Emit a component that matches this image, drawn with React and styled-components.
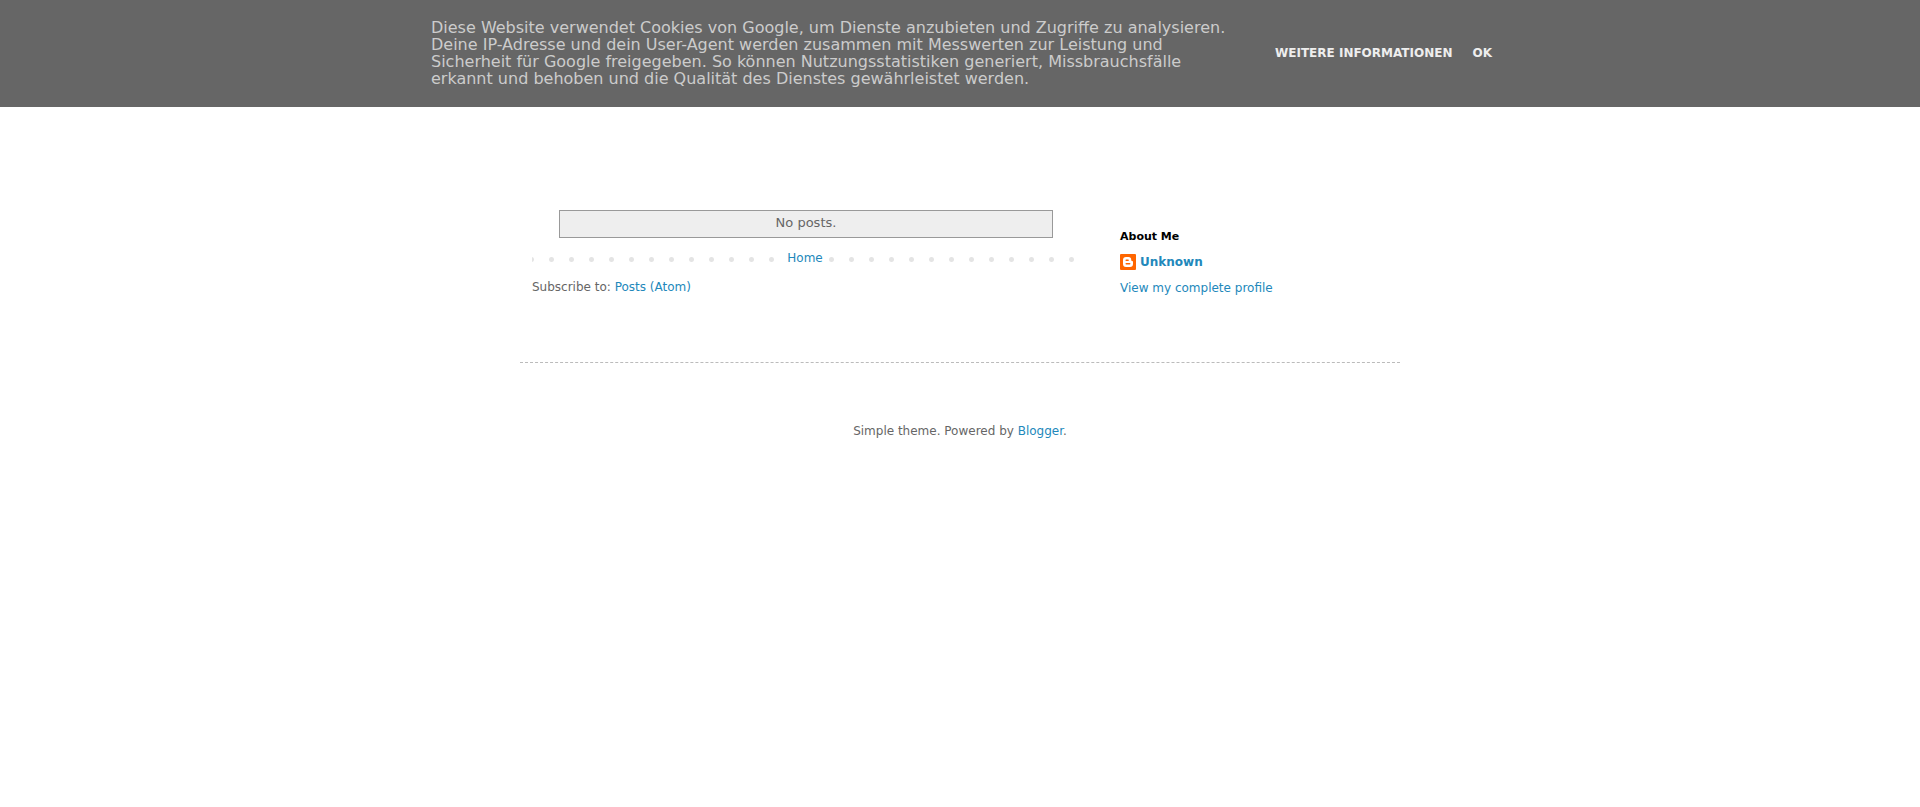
import React from 'react'
import styled, {createGlobalStyle} from 'styled-components'

const GlobalStyle = createGlobalStyle`
 body{
     margin: 0;
     background: #fff;
     color: #666;
     font: normal 12px/17px "DejaVu Sans", Verdana, sans-serif;
 }
 a{
     color: #2288bb;
     text-decoration: none;
 }
 a:hover{
     text-decoration: underline;
 }
`
const CookieBar = styled.div`
 display: flex;
 justify-content: center;
 background: #666;
 padding: 19px 16px 20px 19px;
`
const CookieInner = styled.div`
 display: flex;
 flex: 0 1 1061px;
 justify-content: space-between;
 align-items: flex-start;
`
const CookieText = styled.p`
 max-width: 800px;
 margin: 0;
 color: #ccc;
 font-size: 16px;
 line-height: 17px;
`
const CookieActions = styled.div`
 display: flex;
 flex-shrink: 0;
 gap: 20px;
 padding-top: 26px;
`
const CookieLink = styled.a`
 && {
     color: #eee;
     font-weight: bold;
     text-transform: uppercase;
 }
`
const CookieButton = styled.button`
 border: 0;
 padding: 0;
 background: none;
 color: #eee;
 font: inherit;
 font-weight: bold;
 text-transform: uppercase;
 cursor: pointer;
`
const Content = styled.div`
 box-sizing: border-box;
 max-width: 880px;
 margin: 0 auto;
`
const Columns = styled.div`
 display: grid;
 grid-template-columns: minmax(0, 546px) minmax(0, 260px);
 column-gap: 42px;
 padding: 103px 12px 65px;
`
const Main = styled.main`
 min-width: 0;
`
const StatusMessage = styled.div`
 margin: 0 25px 0 27px;
 padding: 3px 0 6px;
 border: 1px solid #999;
 background: #eee;
 font-size: 13px;
 text-align: center;
`
const Pager = styled.nav`
 margin: 12px 0;
 text-align: center;
 background-image: radial-gradient(circle at 47.5% 50%, #e4e4e4 2px, transparent 3px);
 background-size: 20px 17px;
 background-position: -10px 1px;
 background-repeat: repeat-x;
 a{
     display: inline-block;
     padding: 0 5px;
     background: #fff;
 }
`
const Sidebar = styled.aside`
 padding-top: 18px;
`
const WidgetTitle = styled.h2`
 margin: 0 0 9px;
 color: #000;
 font-size: 11px;
 line-height: 17px;
`
const ProfileName = styled.a`
 display: flex;
 align-items: flex-start;
 gap: 4px;
 margin-bottom: 9px;
 font-weight: bold;
`
const Footer = styled.footer`
 padding: 60px 0;
 border-top: 1px dashed #bbb;
 text-align: center;
`

const BloggerIcon = () => (
    <svg width="16" height="16" viewBox="0 0 16 16" aria-hidden="true">
        <rect width="16" height="16" rx="1" fill="#ff6600" />
        <path
            fill="#fff"
            fillRule="evenodd"
            d="M6 3h2.5A2.7 2.7 0 0 1 11.2 5.7c0 .8.2 1.2.9 1.2.6 0 .9.3.9.9V10a3 3 0 0 1-3 3H6a3 3 0 0 1-3-3V6a3 3 0 0 1 3-3zM6.2 5.5a.7.7 0 0 0 0 1.5h1.9a.7.7 0 0 0 0-1.5zM6.2 9a.7.7 0 0 0 0 1.5h3.5a.7.7 0 0 0 0-1.5z"
        />
    </svg>
)

const CookieNotice = () => {
    return (
        <CookieBar>
            <CookieInner>
                <CookieText>
                    Diese Website verwendet Cookies von Google, um Dienste anzubieten und Zugriffe zu analysieren.
                    Deine IP-Adresse und dein User-Agent werden zusammen mit Messwerten zur Leistung und
                    Sicherheit für Google freigegeben. So können Nutzungsstatistiken generiert, Missbrauchsfälle
                    erkannt und behoben und die Qualität des Dienstes gewährleistet werden.
                </CookieText>
                <CookieActions>
                    <CookieLink href="#info">Weitere Informationen</CookieLink>
                    <CookieButton type="button">Ok</CookieButton>
                </CookieActions>
            </CookieInner>
        </CookieBar>
    )
}

const App = () => {
    return (
        <>
            <GlobalStyle />
            <CookieNotice />
            <Content>
                <Columns>
                    <Main>
                        <StatusMessage>No posts.</StatusMessage>
                        <Pager>
                            <a href="#home">Home</a>
                        </Pager>
                        <div>
                            Subscribe to: <a href="#atom">Posts (Atom)</a>
                        </div>
                    </Main>
                    <Sidebar>
                        <WidgetTitle>About Me</WidgetTitle>
                        <ProfileName href="#profile">
                            <BloggerIcon />
                            Unknown
                        </ProfileName>
                        <a href="#profile">View my complete profile</a>
                    </Sidebar>
                </Columns>
                <Footer>
                    Simple theme. Powered by <a href="#blogger">Blogger</a>.
                </Footer>
            </Content>
        </>
    )
}

export default App
